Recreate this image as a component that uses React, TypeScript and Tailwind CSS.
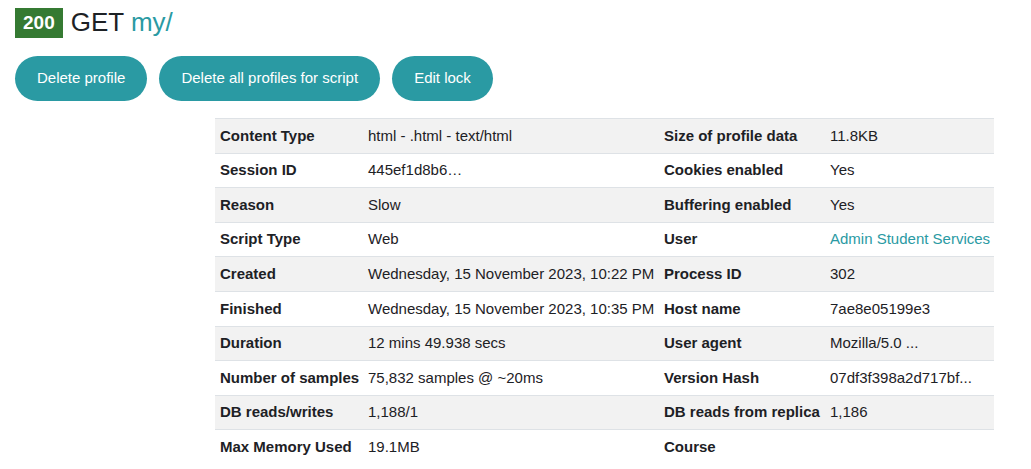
const rows: [string, React.ReactNode, string, React.ReactNode][] = [
  ["Content Type", "html - .html - text/html", "Size of profile data", "11.8KB"],
  ["Session ID", "445ef1d8b6…", "Cookies enabled", "Yes"],
  ["Reason", "Slow", "Buffering enabled", "Yes"],
  ["Script Type", "Web", "User", <a className="text-[#2a9aa3]">Admin Student Services</a>],
  ["Created", "Wednesday, 15 November 2023, 10:22 PM", "Process ID", "302"],
  ["Finished", "Wednesday, 15 November 2023, 10:35 PM", "Host name", "7ae8e05199e3"],
  ["Duration", "12 mins 49.938 secs", "User agent", "Mozilla/5.0 ..."],
  ["Number of samples", "75,832 samples @ ~20ms", "Version Hash", "07df3f398a2d717bf..."],
  ["DB reads/writes", "1,188/1", "DB reads from replica", "1,186"],
  ["Max Memory Used", "19.1MB", "Course", ""],
];

export default function App() {
  return (
    <div className="px-[15px] pt-[7px] text-[15px] text-[#1d2125] bg-white min-h-[469px]"
         style={{ fontFamily: '"Liberation Sans", Arial, sans-serif' }}>
      {/* Title */}
      <h2 className="flex items-center text-[26px] leading-[31px]">
        <span className="bg-[#357a32] text-white font-bold text-[19px] leading-[30px] px-[8px] mr-[8px]">
          200
        </span>
        <span>GET <span className="text-[#2a9aa3]">my/</span></span>
      </h2>

      {/* Action buttons */}
      <div className="flex gap-[12px] mt-[18px]">
        {["Delete profile", "Delete all profiles for script", "Edit lock"].map((b) => (
          <button key={b}
            className="h-[45px] px-[22px] rounded-full bg-[#2a9aa3] text-white text-[15px]">
            {b}
          </button>
        ))}
      </div>

      {/* Profile details */}
      <table className="ml-[200px] mt-[17px] w-[779px] border-collapse table-fixed">
        <colgroup>
          <col className="w-[148px]" />
          <col className="w-[296px]" />
          <col className="w-[166px]" />
          <col className="w-[169px]" />
        </colgroup>
        <tbody>
          {rows.map((r, i) => (
            <tr key={i}
              className={`h-[34.6px] border-t border-[#dee2e6] ${i % 2 === 0 ? "bg-[#f2f2f2]" : ""}`}>
              <th className="text-left font-bold px-[5px] whitespace-nowrap">{r[0]}</th>
              <td className="px-[5px] whitespace-nowrap">{r[1]}</td>
              <th className="text-left font-bold px-[5px] whitespace-nowrap">{r[2]}</th>
              <td className="px-[5px] whitespace-nowrap">{r[3]}</td>
            </tr>
          ))}
        </tbody>
      </table>
    </div>
  );
}
